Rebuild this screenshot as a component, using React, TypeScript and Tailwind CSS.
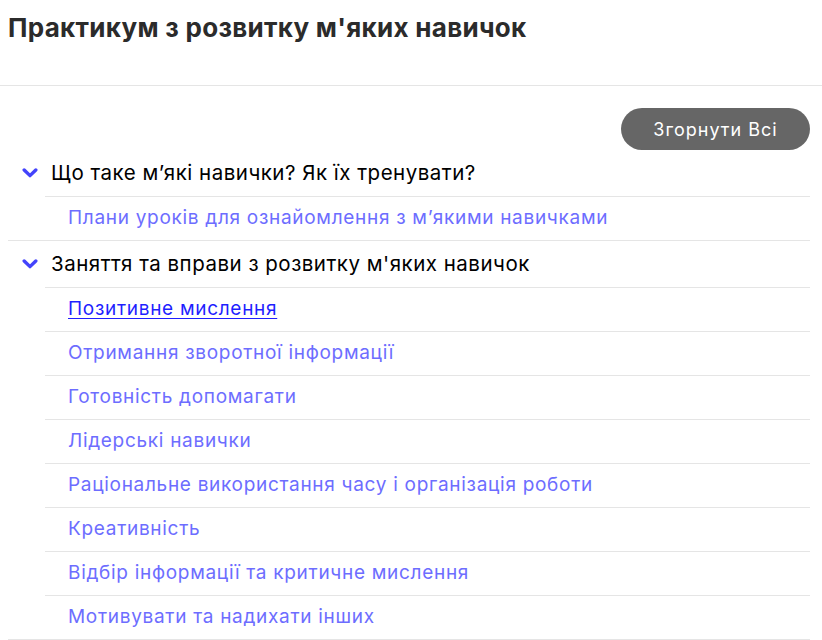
import React, { useState } from 'react';

type Section = {
  title: string;
  items: string[];
};

const SECTIONS: Section[] = [
  {
    title: 'Що таке м’які навички? Як їх тренувати?',
    items: ['Плани уроків для ознайомлення з м’якими навичками'],
  },
  {
    title: "Заняття та вправи з розвитку м'яких навичок",
    items: [
      'Позитивне мислення',
      'Отримання зворотної інформації',
      'Готовність допомагати',
      'Лідерські навички',
      'Раціональне використання часу і організація роботи',
      'Креативність',
      'Відбір інформації та критичне мислення',
      'Мотивувати та надихати інших',
    ],
  },
];

const Chevron: React.FC<{ open: boolean }> = ({ open }) => (
  <svg
    viewBox="0 0 16 16"
    className={`w-[16px] h-[16px] text-[#4343fb] flex-shrink-0 transition-transform ${open ? '' : '-rotate-90'}`}
    fill="none"
    stroke="currentColor"
    strokeWidth={3.4}
    strokeLinecap="round"
    strokeLinejoin="round"
  >
    <path d="M2.2 5l5.8 5.6 5.8-5.6" />
  </svg>
);

const App: React.FC = () => {
  const [open, setOpen] = useState<boolean[]>(SECTIONS.map(() => true));
  const active = 'Позитивне мислення';
  const allOpen = open.some(Boolean);

  return (
    <div className="min-h-screen bg-white font-['Inter',sans-serif] text-[#111]">
      {/* Page title */}
      <div className="px-2 pt-[12px] h-[86px] border-b border-[#e5e5e5]">
        <h1 className="text-[26px] leading-[32px] font-bold text-[#2b2b2b] tracking-[0.3px]">
          Практикум з розвитку м'яких навичок
        </h1>
      </div>

      <div className="pl-2 pr-3 pt-[22px]">
        <div className="flex justify-end">
          <button
            onClick={() => setOpen(SECTIONS.map(() => !allOpen))}
            className="h-[42px] w-[189px] rounded-full bg-[#666666] text-white text-[18px] tracking-[1px]"
          >
            {allOpen ? 'Згорнути Всі' : 'Розгорнути Всі'}
          </button>
        </div>

        {SECTIONS.map((section, i) => (
          <div key={section.title} className="border-b border-[#e5e5e5]">
            <button
              onClick={() => setOpen(open.map((v, j) => (j === i ? !v : v)))}
              className="w-full flex items-stretch text-left"
            >
              <span className="w-[43px] flex items-center justify-center">
                <Chevron open={open[i]} />
              </span>
              <span className="flex-1 h-[46px] flex items-center text-[20.5px] tracking-[0.5px] text-black">
                {section.title}
              </span>
            </button>
            {open[i] && (
              <ul className="ml-[37px]">
                {section.items.map((item) => (
                  <li key={item} className="h-[44px] flex items-center pl-[23px] border-t border-[#e5e5e5]">
                    <a
                      href="#"
                      onClick={(e) => e.preventDefault()}
                      className={`text-[19px] tracking-[0.7px] ${
                        item === active ? 'text-[#1f1fff] underline underline-offset-[3px]' : 'text-[#6d6dff]'
                      }`}
                    >
                      {item}
                    </a>
                  </li>
                ))}
              </ul>
            )}
          </div>
        ))}
      </div>
    </div>
  );
};

export default App;
